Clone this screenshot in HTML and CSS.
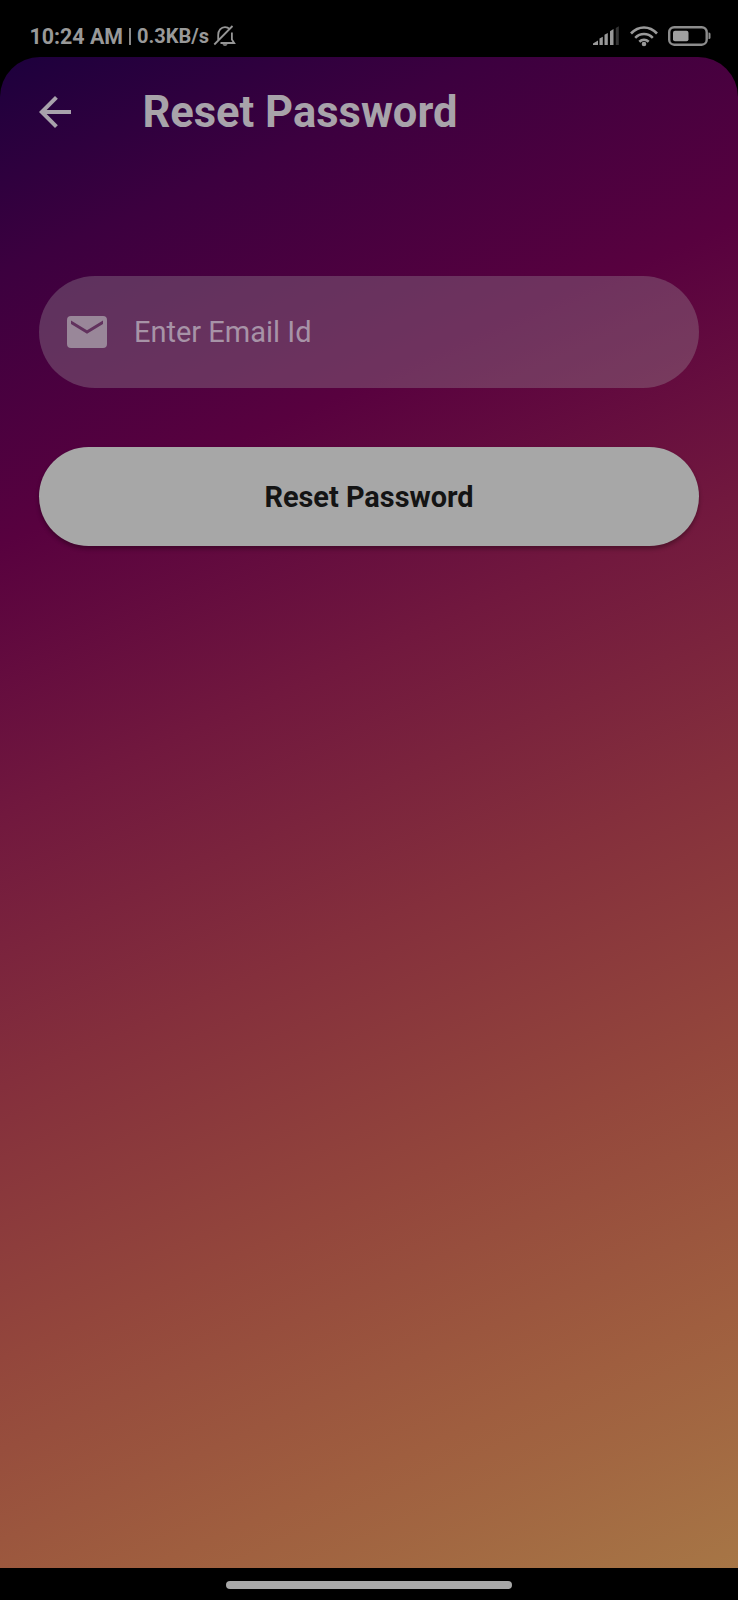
FILE: index.html
```html
<!DOCTYPE html>
<html lang="en">
<head>
<meta charset="utf-8">
<title>Reset Password</title>
<link rel="stylesheet" href="styles.css">
</head>
<body>
<div class="phone">
  <header class="status">
    <span class="clock">10:24 AM</span><span class="bar"></span><span class="speed">0.3KB/s</span>
    <svg class="bell" width="24" height="24" viewBox="0 0 24 24" fill="none" stroke="#969696" stroke-width="1.8">
      <path d="M5.2 16.500V11C5.200 6.500 8 3.200 12 3.200c2 0 3.500.7 4.700 1.900M18.900 8.500V15.500l2.300 3.500H7.500M1.300 20.500 19.500 2"/>
      <path d="M9.500 20.300h5c-1 2-4 2-5 0z" fill="#969696" stroke="none"/>
    </svg>
    <span class="spacer"></span>
    <svg class="signal" width="28" height="20" viewBox="0 0 28 20">
      <path fill="#999" d="M1 19v-1.500L6 14.500V19zM7.500 19v-6.500l3.300-1.700V19zM12.500 19V8.800l3.300-1.800v12zM18 19V5.300l3.500-2.300v16z"/>
      <path fill="#333" d="M23.800 19V2l3-1.700V19z"/>
    </svg>
    <svg class="wifi" width="28" height="21" viewBox="0 0 28 21" fill="none" stroke="#999" stroke-width="2.600">
      <path d="M1 7.500C8.500-.5 19.500-.5 27 7.500M5.200 11.800c5-5 12.600-5 17.600 0M9.300 15.700c2.800-2.600 6.600-2.600 9.400 0"/>
      <circle cx="14" cy="18" r="2.300" fill="#999" stroke="none"/>
    </svg>
    <svg class="battery" width="43" height="20" viewBox="0 0 43 20">
      <rect x="1.200" y="1.200" width="37.500" height="17.500" rx="5" fill="none" stroke="#8c8c8c" stroke-width="2.400"/>
      <rect x="5" y="4.800" width="15.500" height="10.500" rx="2" fill="#a0a0a0"/>
      <path d="M40.500 6.500h.5a1.500 1.500 0 0 1 1.500 1.500v3.500A1.500 1.500 0 0 1 41 13h-.5z" fill="#8c8c8c"/>
    </svg>
  </header>
  <main class="screen">
    <div class="appbar">
      <svg class="back" width="32" height="32" viewBox="4 4 16 16" fill="#a8a2ac"><path d="M20 11H7.830l5.590-5.590L12 4l-8 8 8 8 1.410-1.410L7.830 13H20v-2z"/></svg>
      <h1 class="title">Reset Password</h1>
    </div>
    <div class="field">
      <svg class="mail" width="40" height="32" viewBox="0 0 40 32">
        <path fill="#998799" fill-rule="evenodd" d="M4 0h32a4 4 0 0 1 4 4v24a4 4 0 0 1-4 4H4a4 4 0 0 1-4-4V4a4 4 0 0 1 4-4zM4 4.500v3.500L20 17.800 36 8V4.500L20 14.200z"/>
      </svg>
      <span class="hint">Enter Email Id</span>
    </div>
    <button class="submit">Reset Password</button>
  </main>
  <footer class="nav"><span class="handle"></span></footer>
</div>
</body>
</html>
```
FILE: styles.css
```css
* { box-sizing: border-box; }
body { margin: 0; background: #000; font-family: Roboto, sans-serif; }
.phone { width: 738px; height: 1600px; display: flex; flex-direction: column; background: #000; }
.status {
  height: 57px; flex: none; display: flex; align-items: center;
  padding: 15px 27px 0 29.500px; color: #999; font-size: 21.400px; font-weight: 700;
}
.bar { width: 2px; height: 17px; margin: 0 6px; background: #888; }
.speed { font-size: 20px; }
.bell { margin-left: 4px; }
.spacer { flex: 1; }
.wifi { margin: 0 10px; }
.screen {
  flex: 1; border-radius: 40px 40px 0 0; padding: 0 39.400px;
  display: flex; flex-direction: column;
  background: linear-gradient(156.370deg, #14003c 0%, #3c003f 14.140%, #58013f 28.290%, #71183e 42.430%, #842f3c 56.570%, #93463c 70.710%, #9f5e3f 84.860%, #a77746 99%) 0 -57px / 738px 1600px no-repeat;
}
.appbar { height: 110px; display: flex; align-items: center; }
.title { margin: 1px 0 0 71px; font-size: 43.500px; line-height: 50px; font-weight: 700; color: #a8a3aa; }
.field {
  height: 112px; margin-top: 109px; padding-left: 27.600px; border-radius: 56px;
  display: flex; align-items: center; background: rgba(167,167,167,.3);
}
.hint { margin: -1px 0 0 27px; font-size: 29px; color: #a793a7; }
.submit {
  height: 99px; margin-top: 59px; padding: 0; border: 0; border-radius: 50px;
  background: #a7a7a7; color: #141414; font: 700 28.900px Roboto, sans-serif;
  box-shadow: 0 3px 4px rgba(0,0,0,.3);
}
.nav { height: 32px; display: flex; justify-content: center; padding-top: 13px; }
.handle { width: 286px; height: 8px; border-radius: 4px; background: #a8a8a8; }
```
